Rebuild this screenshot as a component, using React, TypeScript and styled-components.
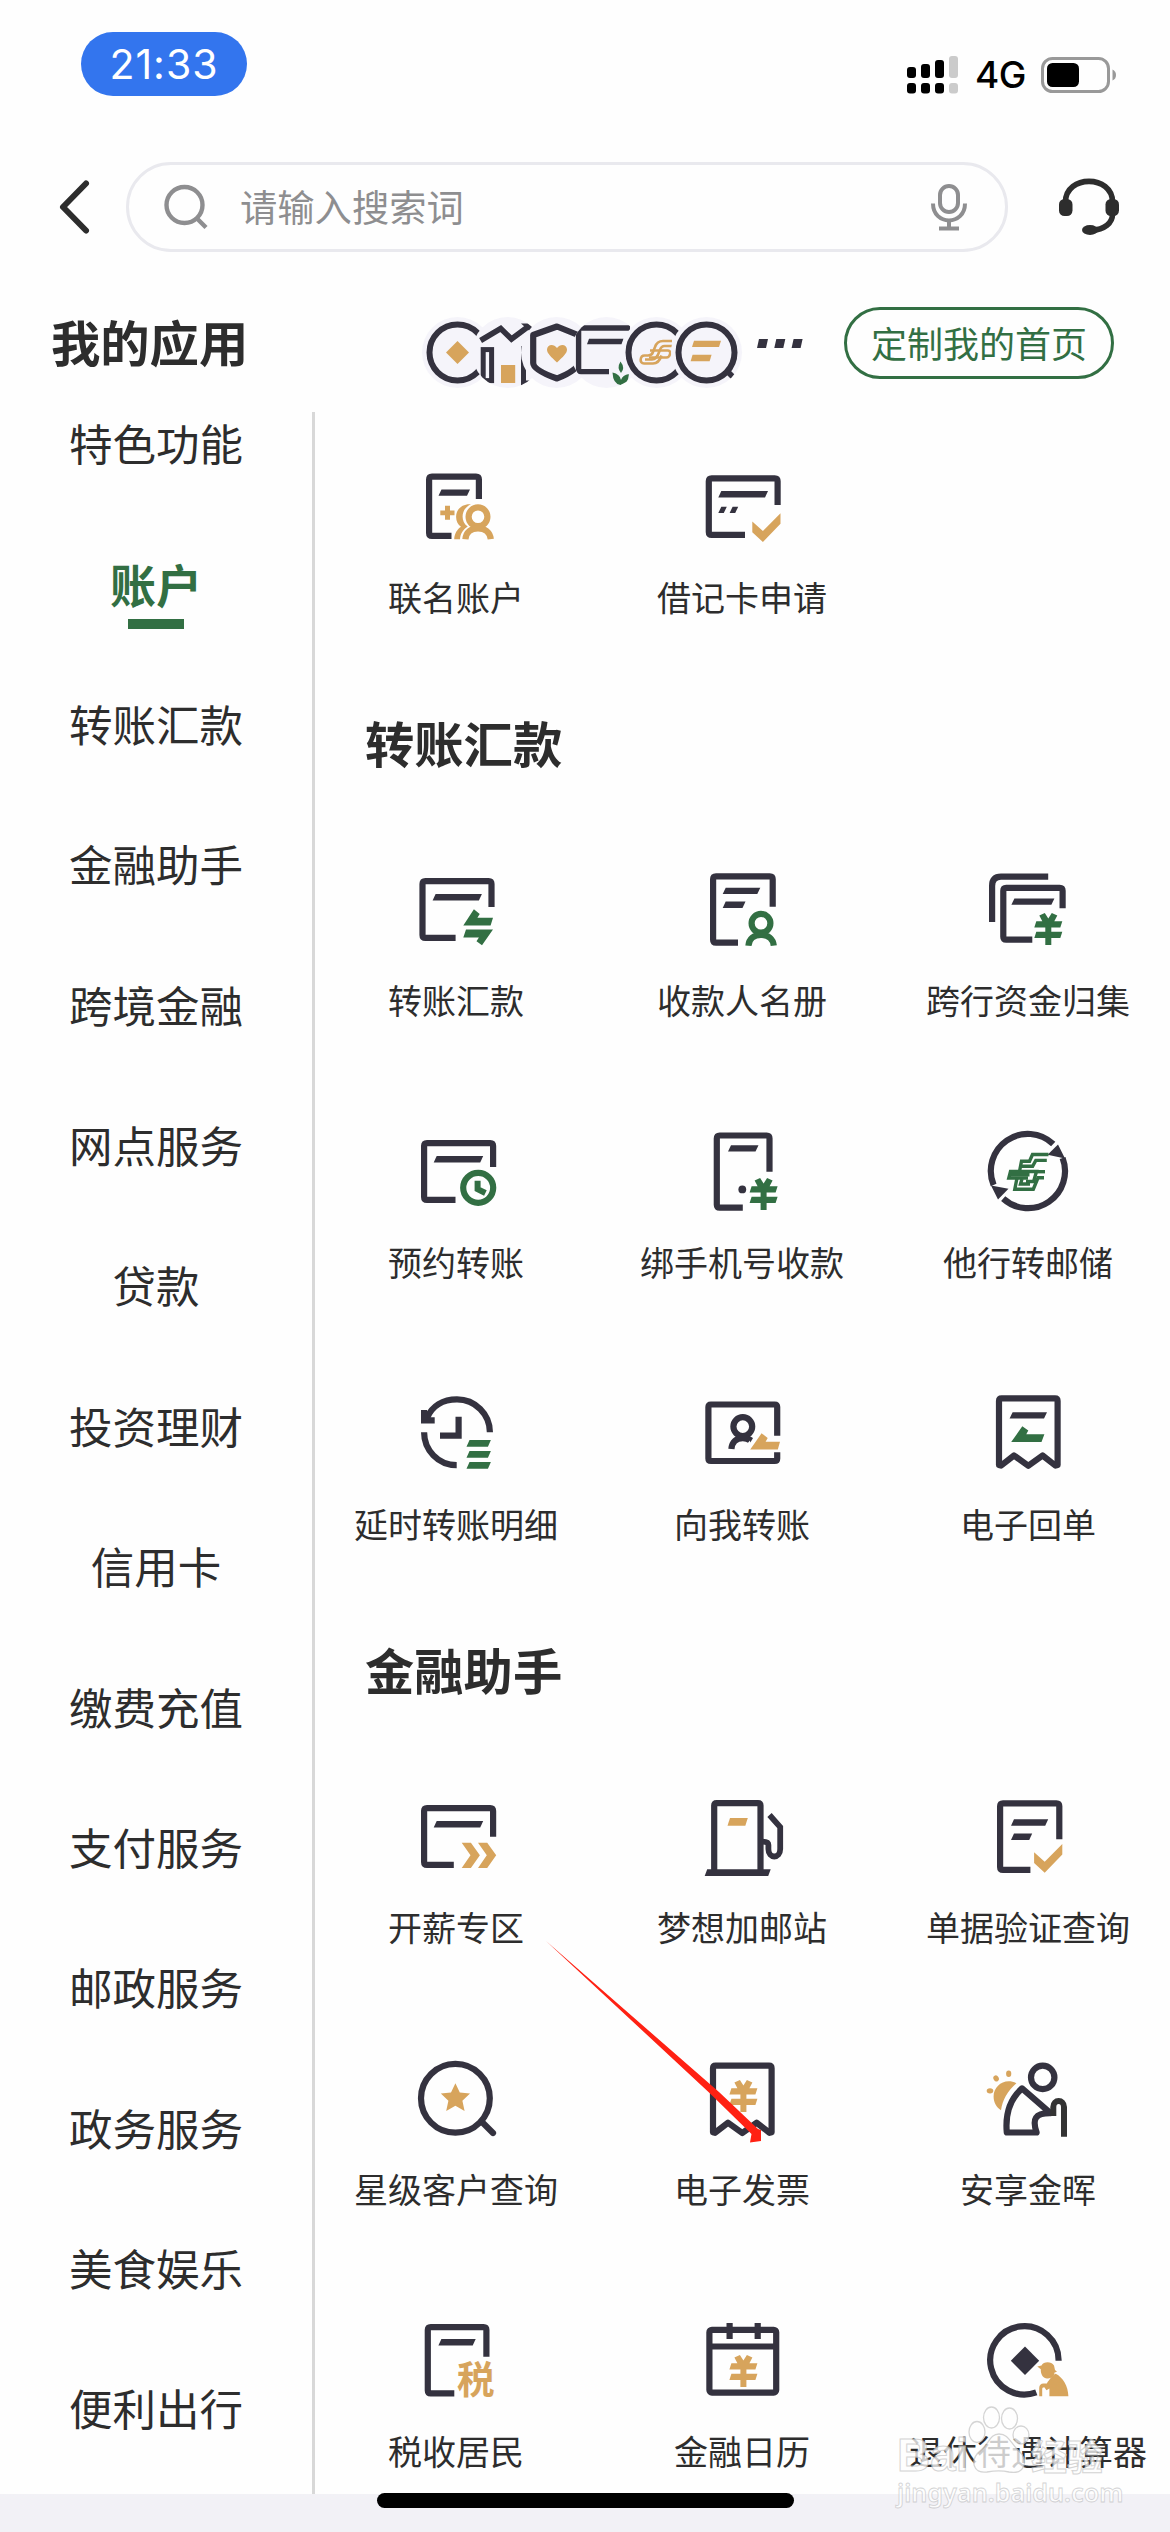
import React from "react";
import styled, { createGlobalStyle } from "styled-components";

const INK = "#34323f";
const GOLD = "#d7a45c";
const GREEN = "#326f43";
const TEXT = "#2d2d2d";

const GlobalStyle = createGlobalStyle`
  * { box-sizing: border-box; }
  body {
    margin: 0;
    background: #fefefe;
    font-family: "Noto Sans CJK SC", "Noto Sans", sans-serif;
    color: ${TEXT};
  }
`;

const Screen = styled.main`
  position: relative;
  display: flex;
  flex-direction: column;
  width: 1170px;
  height: 2532px;
  overflow: hidden;
  background: #fefefe;
`;

const StatusBar = styled.header`
  display: flex;
  justify-content: space-between;
  align-items: flex-start;
  height: 140px;
  padding: 32px 53px 0 81px;
`;

const TimePill = styled.div`
  width: 166px;
  height: 64px;
  border-radius: 32px;
  background: #3375ee;
  color: #fff;
  font: 400 41px/64px Inter, sans-serif;
  letter-spacing: 1px;
  text-align: center;
`;

const StatusRight = styled.div`
  display: flex;
  align-items: center;
  height: 40px;
  margin-top: 23px;
`;

const Network = styled.span`
  width: 51px;
  margin: 0 15px 0 17px;
  color: #000;
  font: 500 37px/40px Inter, sans-serif;
  letter-spacing: -0.5px;
  white-space: nowrap;
`;

const NavRow = styled.div`
  display: flex;
  align-items: center;
  height: 134px;
  padding: 0 0 0 57px;
`;

const SearchBox = styled.div`
  display: flex;
  align-items: center;
  width: 882px;
  height: 90px;
  margin: 0 50px 0 35px;
  padding: 0 37px 0 34px;
  border: 3px solid #e9e9ee;
  border-radius: 45px;
`;

const Placeholder = styled.span`
  flex: 1;
  margin: -2px 0 0 31px;
  color: #8e8e90;
  font-size: 37.3px;
  line-height: 56px;
`;

const TitleRow = styled.div`
  display: flex;
  align-items: center;
  height: 138px;
  padding: 0 56px 0 51px;
`;

const PageTitle = styled.h1`
  width: 371px;
  margin: -4px 0 0;
  font-size: 49.3px;
  line-height: 60px;
  font-weight: 700;
`;

const BadgeStack = styled.div`
  display: flex;
  margin-top: 19px;
`;

const Badge = styled.svg`
  width: 71px;
  height: 71px;
  border-radius: 50%;
  background: #f5f4fa;

  & + & {
    margin-left: -21.3px;
  }
`;

const MoreDots = styled.svg`
  margin-left: 15px;
`;

const CustomButton = styled.button`
  width: 270px;
  height: 72px;
  margin-left: auto;
  padding: 0;
  border: 3px solid ${GREEN};
  border-radius: 36px;
  background: transparent;
  color: ${GREEN};
  font: 400 36px/62px "Noto Sans CJK SC", sans-serif;
  padding-bottom: 3px;
`;

const Body = styled.div`
  display: flex;
  height: 2082px;
`;

const Sidebar = styled.nav`
  width: 315px;
  border-right: 3px solid #d8d8d8;
  overflow: hidden;
`;

const SideList = styled.div`
  display: flex;
  flex-direction: column;
  margin-top: -39px;
`;

const SideItem = styled.a<{ $active?: boolean }>`
  position: relative;
  height: 140.4px;
  text-align: center;
  font-size: ${(p) => (p.$active ? 46 : 43.5)}px;
  line-height: 140.4px;
  font-weight: ${(p) => (p.$active ? 700 : 400)};
  color: ${(p) => (p.$active ? GREEN : TEXT)};

  &::after {
    content: "";
    display: ${(p) => (p.$active ? "block" : "none")};
    position: absolute;
    left: 128px;
    top: 105.5px;
    width: 56px;
    height: 10px;
    background: ${GREEN};
  }
`;

const Content = styled.section`
  flex: 1;
  padding-top: 51px;
  min-width: 0;
`;

const SectionTitle = styled.h2`
  margin: 100px 0 99px;
  padding-left: 50px;
  font-size: 49.3px;
  line-height: 50px;
  font-weight: 700;
`;

const Grid = styled.div`
  display: grid;
  grid-template-columns: repeat(3, 286px);
  row-gap: 106px;
  margin-left: -2px;
`;

const Cell = styled.div`
  display: flex;
  flex-direction: column;
  align-items: center;
  gap: 28px;
  height: 154px;
  margin-bottom: 0;
`;

const AppGridRows = styled(Grid)`
  row-gap: 108px;
`;

const CellLabel = styled.span`
  font-size: 34px;
  line-height: 40px;
  white-space: nowrap;
`;

const Footer = styled.footer`
  display: flex;
  justify-content: center;
  height: 38px;
  background: #f2f1f6;
`;

const HomeBar = styled.div`
  width: 417px;
  height: 15px;
  margin-top: -1px;
  border-radius: 8px;
  background: #000;
`;

const ArrowOverlay = styled.svg`
  position: absolute;
  left: 540px;
  top: 1935px;
`;

const Watermark = styled.div`
  position: absolute;
  left: 897px;
  top: 2404px;
  width: 212px;
  height: 110px;
  opacity: 0.76;
`;

const Paw = styled.svg`
  position: absolute;
  left: 70px;
  top: 0;
`;

const MarkRow = styled.div`
  display: flex;
  justify-content: space-between;
  height: 72px;
  padding-right: 6px;
  padding-top: 26px;
`;

const MarkWord = styled.span<{ $cjk?: boolean }>`
  color: #fff;
  font: 700 ${(p) => (p.$cjk ? 36 : 46)}px/50px
    ${(p) => (p.$cjk ? '"Noto Sans CJK SC"' : '"Liberation Sans"')}, sans-serif;
  -webkit-text-stroke: 1px #c8c8c8;
`;

const MarkUrl = styled.div`
  color: #fff;
  font: 600 25.2px/32px "Noto Sans", sans-serif;
  -webkit-text-stroke: 0.8px #c6c6c8;
  white-space: nowrap;
`;

/* ---- drawing primitives, all in the 86-unit icon space ---- */

type BarProps = { x: number; y: number; w: number; h?: number; c?: string; s?: number };
const Bar = ({ x, y, w, h = 6.4, c = INK, s = 3 }: BarProps) => (
  <path d={`M${x + s} ${y}H${x + w}L${x + w - s} ${y + h}H${x}Z`} fill={c} />
);

type SheetProps = { l: number; t: number; r: number; b: number; re: number; be: number };
/* Rounded sheet whose lower-right corner is left open; edges are outer bounds. */
const Sheet = ({ l, t, r, b, re, be }: SheetProps) => (
  <path
    d={`M${be} ${b - 3.1}H${l + 6}Q${l + 3.1} ${b - 3.1} ${l + 3.1} ${b - 6}V${t + 6}Q${l + 3.1} ${t + 3.1} ${l + 6} ${t + 3.1}H${r - 6}Q${r - 3.1} ${t + 3.1} ${r - 3.1} ${t + 6}V${re}`}
    fill="none"
    stroke={INK}
    strokeWidth={6.2}
  />
);

const Yen = ({ x, y, c }: { x: number; y: number; c: string }) => (
  <g transform={`translate(${x} ${y})`} fill={c}>
    <path d="M5 2.5L10.5 0L14 5.5L17.5 0L23 2.5L20 8.2H28L26 14.4H17V18.8H28L26 25H17V32H11V25H0L2 18.8H11V14.4H0L2 8.2H8Z" />
  </g>
);

const Person = ({ x, y, c }: { x: number; y: number; c: string }) => (
  <g transform={`translate(${x} ${y})`} fill="none" stroke={c} strokeWidth={6.2}>
    <circle cx={0} cy={0} r={9.4} />
    <path d="M-12.6 22.4C-12 15.5 -7 11.6 0 11.6S12 15.5 12.8 22.4" />
  </g>
);

const Check = ({ x, y }: { x: number; y: number }) => (
  <path transform={`translate(${x} ${y})`} fill={GOLD} d="M0 8.3L10.6 17.8L28.2 0V10.5L10.6 28.7L0 19Z" />
);

const Ticket = ({ y }: { y: number }) => (
  <path
    transform={`translate(0 ${y})`}
    fill="none"
    stroke={INK}
    strokeWidth={6.2}
    strokeLinejoin="round"
    d="M14 75V11Q14 8.4 16.6 8.4H70Q72.6 8.4 72.6 11V75L70.5 75.6L57.6 65.5L43.3 75.8L29 65.5L16 75.6Z"
  />
);

const line = (sw = 6.2) => ({ fill: "none", stroke: INK, strokeWidth: sw });

const icons: Record<string, React.ReactNode> = {
  joint: (
    <>
      <Sheet l={13} t={10.5} r={69} b={76} re={36} be={38.5} />
      <Bar x={25.5} y={26.4} w={31.5} />
      <path d="M32 42.7h5v4.7h4.5v4.8H37v4.6h-5v-4.6h-4.7v-4.8H32Z" fill={GOLD} />
      <path d="M58 41.2C49 40.5 43 46.5 43.1 54C43.1 58.5 45 61.5 48 63.8C44 66.6 41.6 70.5 41.2 76.2H47C47.4 71 50 66.6 54.7 63.6C51 61 49.6 57.5 49.6 53.6C49.6 48 53 43.3 58 41.2Z" fill={GOLD} />
      <circle cx={65} cy={53.6} r={12.6} fill="#fefefe" />
      <Person x={65} y={53.8} c={GOLD} />
    </>
  ),
  debit: (
    <>
      <Sheet l={6.7} t={12.3} r={81.7} b={75} re={42} be={46} />
      <Bar x={19.3} y={28} w={49.7} />
      <Bar x={19.3} y={43.7} w={8.5} />
      <Bar x={30.6} y={43.7} w={8.6} />
      <Check x={53.3} y={50.3} />
    </>
  ),
  transfer: (
    <>
      <Sheet l={6.4} t={12} r={81.6} b={75} re={41} be={42.6} />
      <Bar x={19.6} y={28} w={49.3} />
      <path d="M60.9 43.3L66.7 48L64.4 51.7H80L77.6 59.4H50.3Z" fill={GREEN} />
      <path d="M53 63.6H80L69 79.3L63.5 75.2L65.9 71.4H50.3Z" fill={GREEN} />
    </>
  ),
  payees: (
    <>
      <Sheet l={11} t={7.3} r={76.8} b={79.7} re={40.7} be={39} />
      <Bar x={23.7} y={21.7} w={37.6} />
      <Bar x={23.7} y={35.6} w={22.8} />
      <Person x={62} y={57.3} c={GREEN} />
    </>
  ),
  collect: (
    <>
      <path d="M63.2 10.6H16Q7.1 10.6 7.1 20V56" {...line()} />
      <Sheet l={15.2} t={18.7} r={80.7} b={76.7} re={42.3} be={47.3} />
      <Bar x={26.4} y={32.4} w={43} />
      <Yen x={49.3} y={47} c={GREEN} />
    </>
  ),
  schedule: (
    <>
      <Sheet l={8} t={12} r={83.2} b={74.9} re={39} be={42.5} />
      <Bar x={20.7} y={28} w={49.5} />
      <circle cx={65.2} cy={59.8} r={15} fill="none" stroke={GREEN} strokeWidth={6.2} />
      <path d="M64.6 52.8V61.2L72.4 65" fill="none" stroke={GREEN} strokeWidth={6} />
    </>
  ),
  phone: (
    <>
      <Sheet l={14.7} t={4.4} r={73.6} b={82.7} re={43.7} be={43.8} />
      <Bar x={29} y={17.2} w={30.5} />
      <circle cx={43.3} cy={61.4} r={3.9} fill={INK} />
      <Yen x={50.6} y={50} c={GREEN} />
    </>
  ),
  postal: (
    <>
      <path d="M68.2 16A37 37 0 0 0 8.6 57" {...line()} />
      <path d="M18.2 70.6A37 37 0 0 0 77.6 30" {...line()} />
      <path d="M6 57.5L23.5 60.8L13 71.6Z" fill={INK} />
      <path d="M73 16.6L62.6 26.8L80 30.5Z" fill={INK} />
      <g fill="none" stroke={GREEN} strokeWidth={3.4}>
        <path d="M63.5 26.5H47.5L44.5 33.2H36.5L34.5 43.5H25.5L23.8 50H43" />
        <path d="M61.8 32.4H50.8L47.6 38.2H36" />
        <path d="M34 43.5H51.5L48.6 53.5H41" />
        <path d="M32 50L29.8 61.2H48.3L53 49.8H59" />
        <path d="M60 43.7H51" />
        <path d="M26 46.8H44.5M37 51L35.5 56H45" />
      </g>
    </>
  ),
  delayed: (
    <>
      <path d="M14 28C19 16 30 9.4 44 9.4C62 9.4 76.9 24 76.9 42.3" {...line()} />
      <path d="M11.1 42.3C11.1 60 25 75.2 43.7 75.2" {...line()} />
      <path d="M8 20H14L14.9 27.3H21.7V33.4H8Z" fill={INK} />
      <path d="M45.6 26.7V45.7H27" {...line()} />
      <Bar x={53.5} y={50} w={24.4} h={6.8} c={GREEN} />
      <Bar x={53.5} y={61} w={24.4} h={6.8} c={GREEN} />
      <Bar x={53.5} y={72} w={24.4} h={6.8} c={GREEN} />
    </>
  ),
  tome: (
    <>
      <path d="M78.2 45.7V17Q78.2 14.5 75.7 14.5H12Q9.4 14.5 9.4 17V68.5Q9.4 71 12 71H75.7Q78.2 71 78.2 68.5V62.3" {...line()} />
      <circle cx={43.8} cy={36.6} r={9.4} {...line()} />
      <path d="M32.4 59C33 51.5 37.5 48.2 43.8 48.2C46.5 48.2 49 48.8 51 50.5" {...line()} />
      <path d="M49.5 45.5L54 48L51.4 52.5Z" fill={INK} />
      <path d="M62.6 43.3L68.7 48L66.6 51.7H81L78.8 59.4H51.2Z" fill={GOLD} />
    </>
  ),
  receipt: (
    <>
      <Ticket y={0} />
      <Bar x={24.6} y={22.2} w={37.4} />
      <path d="M37.3 36.3L43.3 40.4L41.3 44.2H59.4L56.5 52H26.2Z" fill={GREEN} />
    </>
  ),
  salary: (
    <>
      <Sheet l={8} t={12} r={83.2} b={74.9} re={43.7} be={40.8} />
      <Bar x={20.7} y={28} w={49.5} />
      <path d="M48.7 49.7h9.2L66.9 62.3L57.9 75h-9.2L57.5 62.3Z" fill={GOLD} />
      <path d="M65 49.7h9.2L83.2 62.3L74.2 75H65L73.8 62.3Z" fill={GOLD} />
    </>
  ),
  fuel: (
    <>
      <path d="M15.2 78V12.6Q15.2 10.1 17.7 10.1H59Q61.5 10.1 61.5 12.6V78" {...line()} />
      <Bar x={5.7} y={76.3} w={66} h={6.6} s={2.5} />
      <Bar x={28.5} y={25} w={20.3} h={7.8} c={GOLD} s={2.5} />
      <path d="M70.5 22L81.2 34V56C81.2 66 69.4 66 69.4 56V52Q69.4 48.6 63.5 48.6" {...line(5.8)} />
    </>
  ),
  verify: (
    <>
      <Sheet l={12} t={7.2} r={77.4} b={79.9} re={46.3} be={45.4} />
      <Bar x={26} y={26.3} w={37.2} />
      <Bar x={26} y={40.5} w={21.2} />
      <Check x={49.1} y={51} />
    </>
  ),
  star: (
    <>
      <circle cx={42.4} cy={43.3} r={34.4} {...line()} />
      <path d="M69.5 67.5L80 78" {...line()} strokeLinecap="round" />
      <path d="M42.4 28.2L46.8 37.6L57 38.6L49.4 45.8L51.6 56L42.4 50.8L33.2 56L35.4 45.8L27.8 38.6L38 37.6Z" fill={GOLD} />
    </>
  ),
  invoice: (
    <>
      <Ticket y={2.2} />
      <Yen x={30.4} y={25} c={GOLD} />
    </>
  ),
  elder: (
    <>
      <path d="M31.4 28.2C20 22.5 8.6 30.5 8.6 41.5C8.6 47.5 11.5 52.5 16 55.2C17.5 45 22.5 36 31.4 28.2Z" fill={GOLD} />
      <ellipse cx={5} cy={35.8} rx={3.3} ry={2.6} fill={GOLD} />
      <ellipse cx={11.1} cy={23.4} rx={2.6} ry={3.2} fill={GOLD} transform="rotate(-30 11.1 23.4)" />
      <ellipse cx={23.7} cy={18.8} rx={2.6} ry={3.2} fill={GOLD} />
      <circle cx={57.7} cy={22.4} r={11.7} {...line()} />
      <path d="M37 33.4C25 44 20 58 21.8 77.5H51.6C47 64 50 58 65.5 58.2Z" {...line()} strokeLinejoin="round" />
      <path d="M68.3 61V52C68.3 44 79 44 79 52V81.7" fill="none" stroke="#333" strokeWidth={6} />
    </>
  ),
  tax: (
    <>
      <Sheet l={11.7} t={7} r={76.5} b={79.5} re={39.7} be={41.3} />
      <Bar x={25.4} y={22} w={37.3} />
      <text x={44} y={76.4} fontSize={37.5} fontWeight={700} fill={GOLD} fontFamily="Noto Sans CJK SC, sans-serif">
        税
      </text>
    </>
  ),
  calendar: (
    <>
      <rect x={10.4} y={12.8} width={66.8} height={62.8} rx={2.5} {...line()} />
      <path d="M10 29.5H77M30.6 6V22M58.7 6V22" {...line()} />
      <Yen x={30.4} y={38} c={GOLD} />
    </>
  ),
  pension: (
    <>
      <path d="M73.6 43.7A34.2 34.2 0 1 0 51.3 75.4" {...line()} />
      <path d="M40 29.6L54.2 43.8L40 58L25.8 43.8Z" fill={INK} />
      <path d="M52.3 49.6L56.5 48.6C58.5 44.5 66 44 69 48.5L70 53L72 54.8L69.6 55.5C69 61 64.5 61.5 62 61.5C58.5 61.3 55.5 58 55.8 52.3Z" fill={GOLD} />
      <path d="M70.7 56.8C78 60.5 83 69 83.4 79.2H64.4V71.5L61.5 73.3L59.3 70.3C57.6 70.4 57.2 71 57.2 72.5V79.2H54.2V71Q54.4 66.8 58.6 66.6L61.8 66.4C64.5 62.5 67.5 58 70.7 56.8Z" fill={GOLD} />
    </>
  ),
};

const IconSvg = styled.svg`
  flex: none;
  width: 86px;
  height: 86px;
`;

const AppIcon = ({ name }: { name: string }) => (
  <IconSvg viewBox="0 0 86 86">{icons[name]}</IconSvg>
);

const sideItems = [
  "特色功能", "账户", "转账汇款", "金融助手", "跨境金融", "网点服务", "贷款", "投资理财",
  "信用卡", "缴费充值", "支付服务", "邮政服务", "政务服务", "美食娱乐", "便利出行",
];

const accountApps = [["joint", "联名账户"], ["debit", "借记卡申请"]];

const transferApps = [
  ["transfer", "转账汇款"], ["payees", "收款人名册"], ["collect", "跨行资金归集"],
  ["schedule", "预约转账"], ["phone", "绑手机号收款"], ["postal", "他行转邮储"],
  ["delayed", "延时转账明细"], ["tome", "向我转账"], ["receipt", "电子回单"],
];

const assistantApps = [
  ["salary", "开薪专区"], ["fuel", "梦想加邮站"], ["verify", "单据验证查询"],
  ["star", "星级客户查询"], ["invoice", "电子发票"], ["elder", "安享金晖"],
  ["tax", "税收居民"], ["calendar", "金融日历"], ["pension", "退休待遇计算器"],
];

const AppGrid = ({ apps }: { apps: string[][] }) => (
  <AppGridRows>
    {apps.map(([icon, label]) => (
      <Cell key={label}>
        <AppIcon name={icon} />
        <CellLabel>{label}</CellLabel>
      </Cell>
    ))}
  </AppGridRows>
);

const Ring = () => <circle cx={35.5} cy={35.5} r={28} {...line(6)} />;

const Badges = () => (
  <BadgeStack>
    <Badge viewBox="0 0 71 71">
      <Ring />
      <path d="M35.5 24L47 35.5L35.5 47L24 35.5Z" fill={GOLD} />
    </Badge>
    <Badge viewBox="0 0 71 71">
      <path d="M8.6 23.5L28.7 11.5L39.5 22L57 9" {...line(5.6)} />
      <path d="M49 6.5H62V18Z" fill={INK} />
      <rect x={11.2} y={32.6} width={8.4} height={31} {...line(5)} />
      <rect x={29} y={48} width={14.2} height={18} fill={GOLD} />
      <path d="M51.5 29V66H62" {...line(5)} />
    </Badge>
    <Badge viewBox="0 0 71 71">
      <path d="M36 9.5L57 18V46Q57 53 36 61.5Q12.2 53 12.2 46V18Z" {...line()} strokeLinejoin="round" />
      <path d="M36 45.5C30 40 26 36.5 26 32.6C26 27.5 32.5 26 36 31C39.5 26 46 27.5 46 32.6C46 36.5 42 40 36 45.5Z" fill={GOLD} />
    </Badge>
    <Badge viewBox="0 0 71 71">
      <path d="M38 54.6H10Q7.6 54.6 7.6 52V13.5Q7.6 11 10 11H59" {...line(5.4)} />
      <Bar x={16} y={21.7} w={36.5} h={5.5} s={2} />
      <path d="M49.5 44.5Q54.5 51 50 56Q45.5 51 49.5 44.5Z" fill={GREEN} />
      <path d="M41.5 55.5Q49 57 50 63Q51.5 58 58 57Q57 68 49.5 68Q42 67 41.5 55.5Z" fill={GREEN} />
    </Badge>
    <Badge viewBox="0 0 71 71">
      <Ring />
      <g fill="none" stroke={GOLD} strokeWidth={2.6} strokeLinejoin="round">
        <path d="M51 24H42C37 24 35 27 34 30L32 35C31 38 29.5 38.5 27 38.5H23.5C19 38.5 18 46.5 23 46.5H32C37 46.5 39 43 40.5 38.5" />
        <path d="M51 29H43.5C40 29 39.5 31.5 38.5 34C37 38.5 35 42.5 31 42.5H24" />
        <path d="M29 33.5H47C51 33.5 49 40.5 45.5 40.5H28" />
      </g>
    </Badge>
    <Badge viewBox="0 0 71 71">
      <Ring />
      <path d="M56 54L63.5 61.5" {...line(5.6)} />
      <Bar x={21} y={23.7} w={29} c={GOLD} s={2} />
      <Bar x={19.6} y={37.8} w={21} c={GOLD} s={2} />
    </Badge>
  </BadgeStack>
);

const SignalIcon = () => (
  <svg width={51} height={38} viewBox="0 0 51 38">
    {[11, 8, 4, 0].map((top, i) => (
      <g key={top} fill={i === 3 ? "#cbcbcb" : "#000"}>
        <rect x={i * 14} y={top} width={9} height={22 - top} rx={3} />
        <rect x={i * 14} y={27} width={9} height={10.5} rx={3} />
      </g>
    ))}
  </svg>
);

const BatteryIcon = () => (
  <svg width={76} height={36} viewBox="0 0 76 36">
    <rect x={1.5} y={1.5} width={66} height={33} rx={10} fill="none" stroke="#999" strokeWidth={3} />
    <rect x={6} y={6} width={32} height={24} rx={5.5} fill="#000" />
    <path d="M71.5 12.5Q75 14 75 18T71.5 23.5Z" fill="#999" />
  </svg>
);

const BackIcon = () => (
  <svg width={34} height={56} viewBox="0 0 34 56">
    <path d="M29 4.5L6 28L29 51.5" fill="none" stroke="#2d2d2d" strokeWidth={6} strokeLinecap="round" strokeLinejoin="round" />
  </svg>
);

const SearchIcon = () => (
  <svg width={46} height={46} viewBox="0 0 46 46">
    <g fill="none" stroke="#8e8e90" strokeWidth={4.4}>
      <circle cx={21.5} cy={21} r={18} />
      <path d="M34 34.5L43 43.5" />
    </g>
  </svg>
);

const MicIcon = () => (
  <svg width={38} height={48} viewBox="0 0 38 48">
    <g fill="none" stroke="#8e8e90" strokeWidth={4}>
      <rect x={10} y={3} width={18} height={26} rx={9} />
      <path d="M3 20.5C3 43 35 43 35 20.5M19 37V46M9 45.5H29" />
    </g>
  </svg>
);

const HeadsetIcon = () => (
  <svg width={62} height={58} viewBox="0 0 62 58">
    <path d="M7.5 25V24C7.5 -3.5 54.5 -3.5 54.5 24V36C54.5 45 47 51.5 33 52.5" fill="none" stroke="#2d2d2d" strokeWidth={5.6} />
    <rect x={1} y={21} width={13.5} height={17} rx={5.5} fill="#2d2d2d" />
    <rect x={47.5} y={21} width={13.5} height={17} rx={5.5} fill="#2d2d2d" />
    <ellipse cx={32} cy={52} rx={8} ry={5} fill="#2d2d2d" />
  </svg>
);

export default function App() {
  return (
    <>
      <GlobalStyle />
      <Screen>
        <StatusBar>
          <TimePill>21:33</TimePill>
          <StatusRight>
            <SignalIcon />
            <Network>4G</Network>
            <BatteryIcon />
          </StatusRight>
        </StatusBar>

        <NavRow>
          <BackIcon />
          <SearchBox>
            <SearchIcon />
            <Placeholder>请输入搜索词</Placeholder>
            <MicIcon />
          </SearchBox>
          <HeadsetIcon />
        </NavRow>

        <TitleRow>
          <PageTitle>我的应用</PageTitle>
          <Badges />
          <MoreDots width={46} height={9} viewBox="0 0 46 9">
            <Bar x={0} y={0} w={11} h={9} s={2} />
            <Bar x={17.3} y={0} w={11} h={9} s={2} />
            <Bar x={34.6} y={0} w={11} h={9} s={2} />
          </MoreDots>
          <CustomButton>定制我的首页</CustomButton>
        </TitleRow>

        <Body>
          <Sidebar>
            <SideList>
              {sideItems.map((item) => (
                <SideItem key={item} $active={item === "账户"}>
                  {item}
                </SideItem>
              ))}
            </SideList>
          </Sidebar>
          <Content>
            <AppGrid apps={accountApps} />
            <SectionTitle>转账汇款</SectionTitle>
            <AppGrid apps={transferApps} />
            <SectionTitle>金融助手</SectionTitle>
            <AppGrid apps={assistantApps} />
          </Content>
        </Body>

        <Footer>
          <HomeBar />
        </Footer>

        <ArrowOverlay width={230} height={215} viewBox="0 0 230 215">
          <path d="M6 6L179 157L218 194L221 195V206L210 207.5L211.5 199L169 157.5Z" fill="#ff2113" />
        </ArrowOverlay>

        <Watermark>
          <Paw width={64} height={74} viewBox="0 0 64 74">
            <g fill="#fff" stroke="#c8c8c8" strokeWidth={1.3}>
              <ellipse cx={10} cy={28} rx={8} ry={10.5} />
              <ellipse cx={24.5} cy={13.5} rx={8} ry={10.5} />
              <ellipse cx={42.5} cy={14.5} rx={8} ry={10.5} />
              <ellipse cx={54} cy={31} rx={8} ry={9} />
              <path d="M32 30C23 30 22 40 14 46C2 56 6 70 20 68C28 66.5 36 66.5 42 68C58 71 62 56 52 47C43 39 42 30 32 30Z" />
            </g>
          </Paw>
          <MarkRow>
            <MarkWord>Bai</MarkWord>
            <MarkWord $cjk>经验</MarkWord>
          </MarkRow>
          <MarkUrl>jingyan.baidu.com</MarkUrl>
        </Watermark>
      </Screen>
    </>
  );
}
